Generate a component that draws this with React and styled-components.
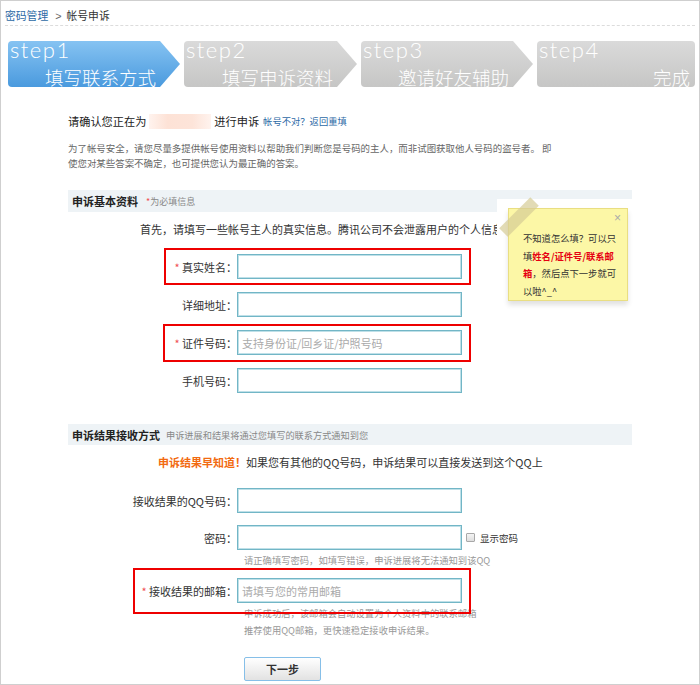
import styled, { createGlobalStyle } from 'styled-components'

const GlobalStyle = createGlobalStyle`
  html, body {
    margin: 0;
    padding: 0;
    background: #fff;
  }
  body {
    font-family: 'Noto Sans CJK SC', 'Noto Sans', sans-serif;
    color: #333;
  }
`

const steps = [
  { no: 1, title: '填写联系方式', width: 172, active: true },
  { no: 2, title: '填写申诉资料', width: 173 },
  { no: 3, title: '邀请好友辅助', width: 172 },
  { no: 4, title: '完成', width: 158, last: true },
]

export default function App() {
  return (
    <>
      <GlobalStyle />
      <Page>
        <Breadcrumb>
          <Crumb href="#">密码管理</Crumb>
          <Sep>&gt;</Sep>
          <span>帐号申诉</span>
        </Breadcrumb>

        <Steps>
          {steps.map((s) => (
            <Step key={s.no} $width={s.width} $active={s.active} $last={s.last}>
              <StepNo>step{s.no}</StepNo>
              <StepTitle>{s.title}</StepTitle>
            </Step>
          ))}
        </Steps>

        <Content>
          <Confirm>
            请确认您正在为<Blur />进行申诉
            <LinkText href="#">帐号不对？返回重填</LinkText>
          </Confirm>
          <Intro>
            为了帐号安全，请您尽量多提供帐号使用资料以帮助我们判断您是号码的主人，而非试图获取他人号码的盗号者。 即
            <br />
            使您对某些答案不确定，也可提供您认为最正确的答案。
          </Intro>

          <Section>
            <SectionBar>
              <SectionTitle>申诉基本资料</SectionTitle>
              <SectionNote>
                <Star>*</Star>为必填信息
              </SectionNote>
            </SectionBar>
            <Lead $indent={72}>
              首先，请填写一些帐号主人的真实信息。腾讯公司不会泄露用户的个人信息
            </Lead>

            <Fields $top={16}>
              <Row>
                <Highlight $left={96} $top={6} $bottom={6} />
                <Label>
                  <Star>*</Star> 真实姓名：
                </Label>
                <Input />
              </Row>
              <Row>
                <Label>详细地址：</Label>
                <Input />
              </Row>
              <Row>
                <Highlight $left={95} $top={6} $bottom={7} />
                <Label>
                  <Star>*</Star> 证件号码：
                </Label>
                <Input placeholder="支持身份证/回乡证/护照号码" />
              </Row>
              <Row>
                <Label>手机号码：</Label>
                <Input />
              </Row>
            </Fields>

            <NoteWrap>
              <Note>
                <Tape />
                <Close>×</Close>
                不知道怎么填？可以只
                <br />
                填<Em>姓名/证件号/联系邮</Em>
                <br />
                <Em>箱</Em>，然后点下一步就可
                <br />
                以啦^_^
              </Note>
            </NoteWrap>
          </Section>

          <Section $top={31}>
            <SectionBar $height={21}>
              <SectionTitle>申诉结果接收方式</SectionTitle>
              <SectionDesc>申诉进展和结果将通过您填写的联系方式通知到您</SectionDesc>
            </SectionBar>
            <Lead $indent={90}>
              <Orange>申诉结果早知道！</Orange>如果您有其他的QQ号码，申诉结果可以直接发送到这个QQ上
            </Lead>

            <Fields $top={17} $gap={12}>
              <Row>
                <Label>接收结果的QQ号码：</Label>
                <Input />
              </Row>
              <Row>
                <Label>密码：</Label>
                <Input type="password" />
                <CheckBox />
                <CheckLabel>显示密码</CheckLabel>
              </Row>
            </Fields>
            <Hint $top={3}>请正确填写密码，如填写错误，申诉进展将无法通知到该QQ</Hint>

            <Fields $top={11}>
              <Row>
                <Highlight $left={65} $top={10} $bottom={11} />
                <Label>
                  <Star>*</Star> 接收结果的邮箱：
                </Label>
                <Input placeholder="请填写您的常用邮箱" />
              </Row>
            </Fields>
            <Hint $top={2} $lh={17}>
              申诉成功后，该邮箱会自动设置为个人资料中的联系邮箱
              <br />
              推荐使用QQ邮箱，更快速稳定接收申诉结果。
            </Hint>

            <NextButton type="button">下一步</NextButton>
          </Section>
        </Content>
      </Page>
    </>
  )
}

const Page = styled.div`
  width: 700px;
  height: 685px;
  box-sizing: border-box;
  border: 1px solid #cfcfcf;
  overflow: hidden;
`

const Breadcrumb = styled.div`
  margin: 0 4px;
  padding-top: 7px;
  height: 17px;
  line-height: 14px;
  font-size: 10.8px;
  color: #333;
  border-bottom: 1px dashed #dcdcdc;
`

const Crumb = styled.a`
  color: #2d6aa6;
  text-decoration: none;
`

const Sep = styled.span`
  margin: 0 5px 0 7px;
  color: #666;
  font-family: 'Liberation Sans', sans-serif;
`

const Steps = styled.div`
  display: flex;
  gap: 4px;
  margin: 15px 0 0 7px;
`

const Step = styled.div`
  width: ${(p) => p.$width}px;
  height: 46px;
  box-sizing: border-box;
  display: flex;
  flex-direction: column;
  justify-content: space-between;
  padding: 0 ${(p) => (p.$last ? 5 : 24)}px 0 2px;
  border-radius: ${(p) => (p.$last ? '4px' : '4px 0 0 4px')};
  background: ${(p) =>
    p.$active
      ? 'linear-gradient(#86c3f2, #4a9ade)'
      : 'linear-gradient(#dadada, #c6c6c5)'};
  clip-path: ${(p) =>
    p.$last
      ? 'none'
      : 'polygon(0 0, calc(100% - 20px) 0, 100% 50%, calc(100% - 20px) 100%, 0 100%)'};
  color: #fff;
`

const StepNo = styled.span`
  font-family: Lato, 'Open Sans', sans-serif;
  font-weight: 300;
  font-size: 22px;
  letter-spacing: 1.5px;
  line-height: 16px;
  margin-top: 1px;
`

const StepTitle = styled.span`
  align-self: flex-end;
  font-size: 18.5px;
  font-weight: 300;
  line-height: 20px;
`

const Content = styled.div`
  padding-left: 67px;
  width: 564px;
`

const Confirm = styled.div`
  margin-top: 25px;
  height: 18px;
  display: flex;
  align-items: center;
  font-size: 11.2px;
  color: #222;
`

const Blur = styled.span`
  display: inline-block;
  width: 62px;
  height: 15px;
  margin: 0 3px;
  background: linear-gradient(to right, #fff3ee, #fde2d6 30%, #fde4d9 70%, #fff3ee);
`

const LinkText = styled.a`
  margin-left: 4px;
  font-size: 9.3px;
  color: #2d6aa6;
  text-decoration: none;
`

const Intro = styled.p`
  margin: 11px 0 0;
  font-size: 9.45px;
  line-height: 15px;
  color: #666;
  white-space: nowrap;
`

const Section = styled.div`
  position: relative;
  margin-top: ${(p) => p.$top ?? 19}px;
`

const SectionBar = styled.div`
  height: ${(p) => p.$height ?? 22}px;
  display: flex;
  align-items: center;
  padding-left: 4px;
  background: #eef3f6;
`

const SectionTitle = styled.span`
  font-size: 11px;
  font-weight: 700;
  color: #222;
`

const SectionNote = styled.span`
  margin-left: 8px;
  font-size: 9px;
  color: #888;
`

const SectionDesc = styled.span`
  margin-left: 6px;
  font-size: 9.2px;
  color: #888;
`

const Star = styled.span`
  color: #f05050;
`

const Lead = styled.div`
  margin-top: 8px;
  padding-left: ${(p) => p.$indent}px;
  line-height: 18px;
  font-size: 11px;
  color: #333;
  white-space: nowrap;
`

const Orange = styled.span`
  color: #f26a10;
  font-weight: 700;
`

const Fields = styled.div`
  display: flex;
  flex-direction: column;
  gap: ${(p) => p.$gap ?? 13}px;
  margin-top: ${(p) => p.$top}px;
`

const Row = styled.div`
  position: relative;
  display: flex;
  align-items: center;
  height: 25px;
`

const Highlight = styled.span`
  position: absolute;
  left: ${(p) => p.$left}px;
  width: ${(p) => 403 - p.$left}px;
  top: -${(p) => p.$top}px;
  bottom: -${(p) => p.$bottom}px;
  box-sizing: border-box;
  border: 2px solid #ee0000;
  pointer-events: none;
`

const Label = styled.label`
  width: 169px;
  flex: none;
  text-align: right;
  font-size: 11px;
  color: #333;
  white-space: nowrap;
`

const Input = styled.input`
  width: 225px;
  height: 25px;
  box-sizing: border-box;
  padding: 0 4px;
  border: 1px solid #72b6c6;
  box-shadow: inset 0 0 0 1px #bfe0e8;
  outline: none;
  font-family: inherit;
  font-size: 11px;
  color: #333;
  background: #fff;

  &::placeholder {
    color: #aaa;
  }
`

const CheckBox = styled.span`
  width: 9px;
  height: 9px;
  margin-left: 4px;
  box-sizing: border-box;
  border: 1px solid #a8a8a8;
  border-radius: 1px;
  background: linear-gradient(#f4f4f4, #dedede);
`

const CheckLabel = styled.span`
  margin-left: 5px;
  font-size: 9.5px;
  color: #333;
`

const Hint = styled.div`
  margin-top: ${(p) => p.$top}px;
  padding-left: 176px;
  font-size: 9.3px;
  line-height: ${(p) => p.$lh ?? 14}px;
  color: #999;
  white-space: nowrap;
`

const NextButton = styled.button`
  display: block;
  margin: 18px 0 0 176px;
  width: 77px;
  height: 24px;
  padding: 0;
  border: 1px solid #86bfe8;
  border-radius: 2px;
  background: linear-gradient(#ffffff, #e2e2e2);
  font-family: inherit;
  font-size: 11px;
  font-weight: 700;
  color: #333;
  cursor: pointer;
`

const NoteWrap = styled.div`
  position: absolute;
  left: 429px;
  top: 9px;
  width: 135px;
  height: 112px;
  background: #fff;
`

const Note = styled.div`
  position: relative;
  margin: 9px 0 0 11px;
  width: 120px;
  height: 93px;
  box-sizing: border-box;
  padding: 21px 8px 0 14px;
  border: 1px solid #e9de82;
  background: #fcf7a6;
  box-shadow: 0 4px 5px rgba(0, 0, 0, 0.12);
  font-size: 9.3px;
  line-height: 17.5px;
  color: #333;
  white-space: nowrap;
`

const Em = styled.b`
  color: #e60012;
`

const Tape = styled.span`
  position: absolute;
  left: -12px;
  top: 2px;
  width: 44px;
  height: 12px;
  background: rgba(214, 204, 150, 0.7);
  transform: rotate(-45deg);
`

const Close = styled.span`
  position: absolute;
  right: 6px;
  top: 3px;
  font-family: 'Liberation Sans', sans-serif;
  font-size: 12px;
  line-height: 12px;
  color: #aaa;
`
